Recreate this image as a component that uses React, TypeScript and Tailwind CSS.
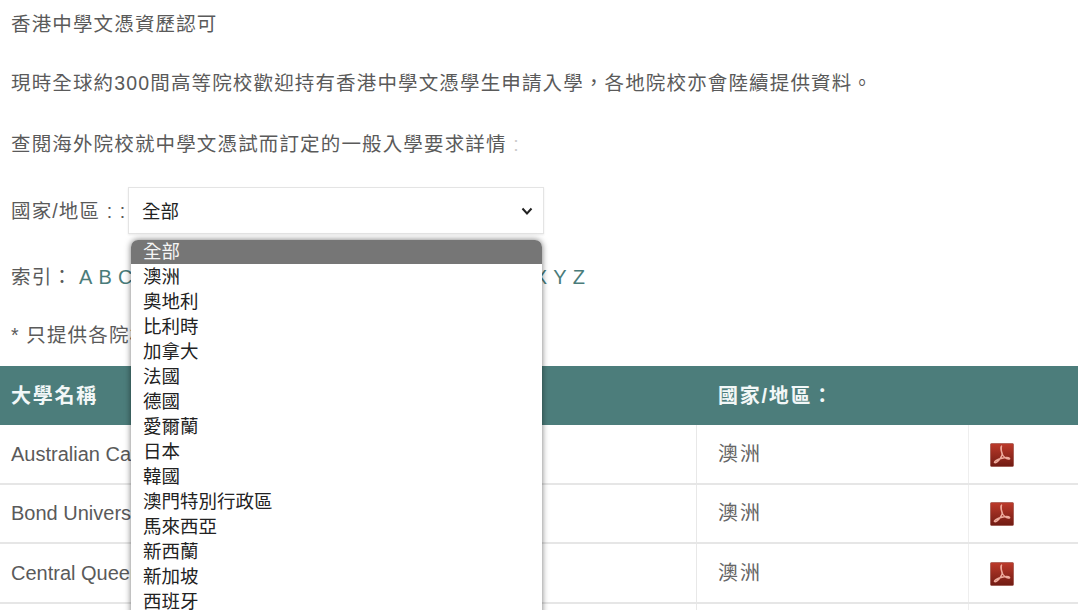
const font = "font-['Liberation_Sans','Noto_Sans_CJK_TC',sans-serif]";

const options = ['澳洲','奧地利','比利時','加拿大','法國','德國','愛爾蘭','日本','韓國','澳門特別行政區','馬來西亞','新西蘭','新加坡','西班牙','瑞典'];
const rows = ['Australian Catholic University','Bond University','Central Queensland University','Charles Darwin University'];
const letters = 'A B C D E F G H I J K L M N O P Q R S T U V W X Y Z'.split(' ');

function PdfIcon() {
  return (
    <svg width="24" height="24" viewBox="0 0 24 24" className="block">
      <defs>
        <linearGradient id="pdfg" x1="0" y1="0" x2="0" y2="1">
          <stop offset="0" stopColor="#bd3a2b" />
          <stop offset="1" stopColor="#701b13" />
        </linearGradient>
      </defs>
      <rect x="0.5" y="0.5" width="23" height="23" rx="1" fill="url(#pdfg)" stroke="#93453a" strokeWidth="0.6" />
      <path d="M11.500 3.500c-.9 0-.7 2.800 0 5.200.9 3 1 3.400-1.400 7C8.400 18.200 5.500 20.500 4.500 19.500c-.8-.9 3.200-3.200 6.500-4 3-.8 7.500-1.100 8.500-.2.8.8-2 1.500-4.500-.5-2.200-1.800-3.300-4.800-3.600-7-.2-1.500-.1-4.800.1-4.800z" fill="none" stroke="#eeaa9c" strokeWidth="1.400" strokeLinejoin="round" />
    </svg>
  );
}

export default function App() {
  return (
    <div className={`relative h-[610px] w-[1078px] overflow-hidden bg-white text-[#5a5a5a] ${font}`}>
      <div className="px-[11px] text-[19.500px] leading-[26px] tracking-[1.150px]">
        <p className="pt-[11px]">香港中學文憑資歷認可</p>
        <p className="pt-[33px]">現時全球約300間高等院校歡迎持有香港中學文憑學生申請入學，各地院校亦會陸續提供資料。</p>
        <p className="pt-[35px]">查閱海外院校就中學文憑試而訂定的一般入學要求詳情<span className="text-[#cccccc]"> :</span></p>
        <div className="mt-[30px] flex items-center">
          <span className="w-[117px] whitespace-nowrap">國家/地區 : :</span>
          <div className="flex h-[47px] w-[416px] items-center justify-between border border-[#e4e4e4] pl-[13px] pr-[9px] text-[18.500px] tracking-normal text-[#222] shadow-[0_1px_2px_rgba(0,0,0,0.08)]">
            <span className="pt-[2px]">全部</span>
            <svg width="14" height="14" viewBox="0 0 14 14"><path d="M2.500 4.500 7 9.500l4.500-5" fill="none" stroke="#222" strokeWidth="2" /></svg>
          </div>
        </div>
        <div className="mt-[30px] flex items-center">
          <span className="mr-[6px] whitespace-nowrap">索引：</span>
          <div className="flex gap-[6.150px] text-[20px] tracking-normal text-[#4a7c7a]">
            {letters.map((l) => <span key={l}>{l}</span>)}
          </div>
        </div>
        <p className="pt-[32px]">* 只提供各院校資料</p>
      </div>

      <div className="mt-[18px]">
        <div className="flex h-[59px] items-center bg-[#4c7d7b] text-[20px] font-bold tracking-[1.750px] text-[#f2f7f7]">
          <div className="w-[696px] pl-[11px]">大學名稱</div>
          <div className="pl-[22px]">國家/地區：</div>
        </div>
        {rows.map((r) => (
          <div key={r} className="flex h-[59.500px] border-b-2 border-[#e6e6e6] text-[20px]">
            <div className="flex w-[697px] items-center whitespace-nowrap border-r border-[#e8e8e8] pl-[11px]">{r}</div>
            <div className="flex w-[272px] items-center border-r border-[#eeeeee] pl-[21px] tracking-[2px] text-[#666]">澳洲</div>
            <div className="flex items-center pl-[21px] pt-[2px]"><PdfIcon /></div>
          </div>
        ))}
      </div>

      <div className="absolute left-[131px] top-[240px] w-[411px] overflow-hidden rounded-t-[7px] bg-white text-[18.500px] leading-[25px] text-[#222] shadow-[0_0_6px_rgba(0,0,0,0.55)]">
        <div className="h-[24px] bg-[#767676] pl-[12px] leading-[24px] text-[#f5f5f5]">全部</div>
        {options.map((o) => <div key={o} className="h-[25px] whitespace-nowrap pl-[12px]">{o}</div>)}
      </div>
    </div>
  );
}
